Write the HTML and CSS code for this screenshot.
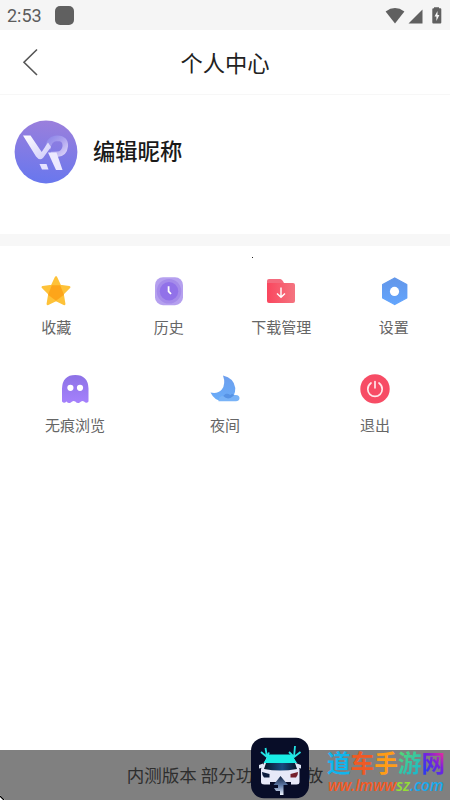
FILE: index.html
```html
<!DOCTYPE html>
<html lang="zh-CN">
<head>
<meta charset="utf-8">
<title>个人中心</title>
<link rel="stylesheet" href="styles.css">
</head>
<body>
<div class="screen">
  <div class="status">
    <span class="time">2:53</span><span class="app-dot"></span>
    <svg class="signals" width="60" height="20" viewBox="0 0 60 20" fill="#606060">
      <path d="M.6 4.5Q10 -2.3 19.4 4.5L10 16.5Z"/>
      <path d="M23.5 16.5L37.5 2.5V16.5Z"/>
      <path d="M49 1.3V.3H54V1.3H55.3Q56.3 1.3 56.3 2.3V15.5Q56.3 16.5 55.3 16.5H48.3Q47.3 16.5 47.3 15.5V2.3Q47.3 1.3 48.3 1.3Z"/>
      <path d="M52.5 4L49.5 9.5H51.4V14L54.4 8H52.5Z" fill="#f5f5f5"/>
    </svg>
  </div>
  <header class="header">
    <svg class="back" width="18" height="30" viewBox="0 0 18 30"><path d="M15 2.5L2 15.3L15 28" fill="none" stroke="#555" stroke-width="1.6"/></svg>
    <h1>个人中心</h1>
  </header>
  <section class="profile">
    <svg width="64" height="64" viewBox="0 0 64 64">
      <defs>
        <linearGradient id="av" x1=".5" y1="0" x2=".4" y2="1"><stop stop-color="#9a7fdc"/><stop offset="1" stop-color="#6877ee"/></linearGradient>
        <linearGradient id="ring" x1="0" y1="0" x2="1" y2="1"><stop stop-color="#8f89e9"/><stop offset=".45" stop-color="#aaa0ee"/><stop offset="1" stop-color="#d8d0f8"/></linearGradient>
        <linearGradient id="vee" x1="0" y1="0" x2="1" y2="1"><stop stop-color="#fff"/><stop offset="1" stop-color="#cdc9fa"/></linearGradient>
      </defs>
      <circle cx="32" cy="32" r="31.4" fill="url(#av)"/>
      <path d="M34 29Q34.5 18.5 43.5 18.3Q51.5 18.5 51.3 26Q50.5 34 43 34.3L37 34.5" fill="none" stroke="url(#ring)" stroke-width="5.5"/>
      <path d="M9 15.5H16.5L27.7 32L34 22.5L37 27L29 38Q25.5 41 22 36.5Z" fill="url(#vee)"/>
      <path d="M34 32.5H42.5L48.5 50H42Z" fill="#ece9ff"/>
      <path d="M25.5 44H32.5L34.5 49.5H28Z" fill="#e5e2ff"/>
    </svg>
    <span class="nickname">编辑昵称</span>
  </section>
  <main class="menu">
    <i class="speck"></i>
    <div class="row four">
      <div class="item">
        <svg width="32" height="32" viewBox="0 0 32 32"><path d="M16 2.5L20 11L29.2 12.2L22.5 18.8L24.2 29L16 24.8L7.8 29L9.5 18.8L2.8 12.2L12 11Z" fill="#fec239" stroke="#fec239" stroke-width="2.5" stroke-linejoin="round"/><path d="M11.8 10.3H20.2L24 19.7L16 25.8L8 19.7Z" fill="#fda51a"/></svg>
        <span>收藏</span>
      </div>
      <div class="item">
        <svg width="32" height="32" viewBox="0 0 32 32"><rect x="2" y="2.2" width="28" height="28" rx="8" fill="#b5a0ef"/><circle cx="16" cy="16.2" r="12.3" fill="#a58bea"/><circle cx="16" cy="16.2" r="9.2" fill="#9171e9"/><path d="M15.6 11.3V16.3L18 19" fill="none" stroke="#fff" stroke-width="1.8"/></svg>
        <span>历史</span>
      </div>
      <div class="item">
        <svg width="32" height="32" viewBox="0 0 32 32"><defs><linearGradient id="fo"><stop stop-color="#fa465e"/><stop offset="1" stop-color="#f47480"/></linearGradient></defs><path d="M2 6Q2 4 4 4H15Q17 4 19 8H2Z" fill="#f46b7e"/><path d="M2 8H28Q30 8 30 10V26Q30 28 28 28H4Q2 28 2 26Z" fill="url(#fo)"/><path d="M16 12.5V22M12 18.5L16 22.3L20 18.5" fill="none" stroke="#fff" stroke-width="1.4"/></svg>
        <span>下载管理</span>
      </div>
      <div class="item">
        <svg width="32" height="32" viewBox="0 0 32 32"><defs><linearGradient id="hx" x1="0" y1="0" x2="0" y2="1"><stop stop-color="#6296e9"/><stop offset="1" stop-color="#63a5fd"/></linearGradient></defs><path d="M16.7 3L28.7 9.5V23L16.7 29.5L4.7 23V9.5Z" fill="url(#hx)" stroke="url(#hx)" stroke-width="1.4" stroke-linejoin="round"/><circle cx="16.5" cy="16.4" r="4.6" fill="#fff"/></svg>
        <span>设置</span>
      </div>
    </div>
    <div class="row three">
      <div class="item">
        <svg width="32" height="32" viewBox="0 0 32 32"><defs><linearGradient id="gh" x1="0" y1="0" x2="0" y2="1"><stop stop-color="#8d72e6"/><stop offset="1" stop-color="#a581fc"/></linearGradient></defs><path d="M3 15.5Q3.5 2 16.3 2Q29 2 29.5 15.5V28.5Q27.5 31 25 28.5Q23 27 20.7 29.5Q18.5 31 16.3 28.5Q14 27 11.8 29.5Q9.5 31 7.5 28.5Q5 31 3 28.5Z" fill="url(#gh)"/><circle cx="11.4" cy="14.8" r="3.1" fill="#fff"/><circle cx="21" cy="14.8" r="3.1" fill="#fff"/></svg>
        <span>无痕浏览</span>
      </div>
      <div class="item">
        <svg width="32" height="32" viewBox="0 0 32 32"><defs><linearGradient id="mo" x1="0" y1="0" x2="0" y2="1"><stop stop-color="#6d9eed"/><stop offset="1" stop-color="#69adfa"/></linearGradient></defs><path d="M14 2.5Q25 5 26.3 15Q26.5 23 20 27Q7 31 1.5 19.5Q9 21 12.8 16.5Q17 11 14 2.5Z" fill="url(#mo)"/><path d="M9.5 28.3Q9.5 23 14.5 23Q17 18.5 21.5 22Q23.5 20.3 25.8 22Q30.7 21.5 30.5 25.5Q30 28.3 27 28.3Z" fill="#79b3f7"/><path d="M14.2 23Q17 18.5 21.5 22Q23.5 20 25 22.5Q19 28 14.2 23Z" fill="#5793e5"/></svg>
        <span>夜间</span>
      </div>
      <div class="item">
        <svg width="32" height="32" viewBox="0 0 32 32"><circle cx="16" cy="15.9" r="14.7" fill="#f74c65"/><path d="M12 10Q8.8 12.3 8.8 16.2A7.2 7.2 0 0 0 23.2 16.2Q23.2 12.3 20 10M16 8.5V14.8" fill="none" stroke="#ffe8eb" stroke-width="1.7" stroke-linecap="round"/></svg>
        <span>退出</span>
      </div>
    </div>
  </main>
  <footer class="toast">内测版本 部分功能未开放</footer>
  <svg class="corner" width="5" height="5" viewBox="0 0 5 5"><path d="M0 0L5 5H0Z" fill="#fff"/><path d="M0 1L4 5" stroke="#000" stroke-width="1.3"/></svg>
  <svg class="car" width="60" height="62" viewBox="0 0 60 62">
    <defs>
      <linearGradient id="gl"><stop stop-color="#081529"/><stop offset=".55" stop-color="#174a80"/><stop offset="1" stop-color="#081529"/></linearGradient>
      <linearGradient id="rd" x1="0" y1="0" x2="0" y2="1"><stop stop-color="#10213f"/><stop offset=".5" stop-color="#607ba8"/><stop offset="1" stop-color="#eef4ff"/></linearGradient>
    </defs>
    <rect x="1" y=".8" width="58" height="60.5" rx="13" fill="#080d28"/>
    <path d="M18 18H42L47.5 28L49.5 32V45Q49.5 47.5 46.5 47.5H41V45H20V47.5H14.5Q11 47.5 11 45V32L13 28Z" fill="#e7e9f8"/>
    <path d="M19 17.5H41.5L47 26H13.5Z" fill="#19ede6"/>
    <path d="M16 26H45L47 32Q30 35 14 32Z" fill="url(#gl)"/>
    <path d="M9 28L13 26.5V30.5L9 31.5ZM51 28L47 26.5V30.5L51 31.5Z" fill="#dfe7f5"/>
    <path d="M12 35L19.5 37V40.5H14Q12 39 12 35Z" fill="#0c1c3d"/><path d="M48 35L40.5 37V40.5H46Q48 39 48 35Z" fill="#76202c"/>
    <path d="M30.5 39L38 48H33.5V58H30V54H26L24 51H28V48H23.5Z" fill="url(#rd)"/>
    <path d="M15.5 11L17 20M11 15L17 20L19 15.5M45 9L44 20M39 15L44 20L50.5 15" fill="none" stroke="#24e4e5" stroke-width="1.8"/>
  </svg>
  <div class="brand">
    <div class="brand-name"><span class="c1">道</span><span class="c2">车</span><span class="c3">手</span><span class="c4">游</span><span class="c5">网</span></div>
    <div class="brand-url"><span class="u1">ww.lmww</span><span class="u2">sz</span><span class="u3">.com</span></div>
  </div>
</div>
</body>
</html>
```
FILE: styles.css
```css
* { box-sizing: border-box; }
body { margin: 0; font-family: "Noto Sans CJK SC", sans-serif; background: #fff; }
.screen { position: relative; width: 450px; height: 800px; overflow: hidden; display: flex; flex-direction: column; }
.status { height: 30px; background: #f5f5f5; display: flex; align-items: center; padding-left: 7px; flex: none; }
.time { font: 400 18px/30px Roboto, sans-serif; color: #5c5c5c; width: 48px; padding-top: 2px; }
.app-dot { width: 19px; height: 19px; border-radius: 5px; background: #606060; }
.signals { margin-left: auto; margin-right: 5px; margin-top: 3px; }
.header { height: 65px; border-bottom: 1px solid #f7f7f7; display: grid; grid-template-columns: 60px 1fr 60px; align-items: center; flex: none; }
.back { margin-left: 22px; }
h1 { margin: 0; font-size: 22.3px; line-height: 32px; font-weight: 400; text-align: center; color: #222; }
.profile { height: 151px; border-bottom: 12px solid #f7f7f7; padding: 25px 14px; display: flex; gap: 15px; flex: none; }
.nickname { font-size: 22.3px; line-height: 60px; font-weight: 500; color: #1a1a1a; }
.menu { position: relative; flex: 1; padding-top: 29px; }
.speck { position: absolute; left: 252px; top: 11px; width: 1px; height: 1px; background: #222; }
.row { display: grid; height: 98px; }
.four { grid-template-columns: repeat(4, 1fr); }
.three { grid-template-columns: repeat(3, 1fr); }
.item { display: flex; flex-direction: column; align-items: center; gap: 9px; font-size: 15px; line-height: 22px; color: #666; }
.toast { height: 50px; flex: none; background: #808080; color: #2e2e2e; text-align: center; font-size: 17.5px; line-height: 49px; }
.corner { position: absolute; left: 0; bottom: 0; }
.car { position: absolute; left: 250px; top: 737px; }
.brand { position: absolute; left: 327px; top: 749px; }
.brand-name { display: flex; font-weight: 700; font-size: 23.6px; line-height: 26px; }
.brand-url { display: flex; padding-left: 1px; font: italic 600 15.5px/20px "Open Sans", sans-serif; letter-spacing: -.1px; }
.c1 { color: #10b5ed; }
.c2 { color: #f05a24; }
.c3 { color: #ff9c16; }
.c4, .c5 { background: linear-gradient(135deg, #5bdc68, #13b5d8); -webkit-background-clip: text; background-clip: text; color: transparent; }
.c5 { background-image: linear-gradient(45deg, #3338ee 20%, #7921dd 55%, #f02a9b 90%); }
.u1 { color: #f35a24; }
.u2 { color: #94de36; }
.u3 { color: #18a9ed; }
```
